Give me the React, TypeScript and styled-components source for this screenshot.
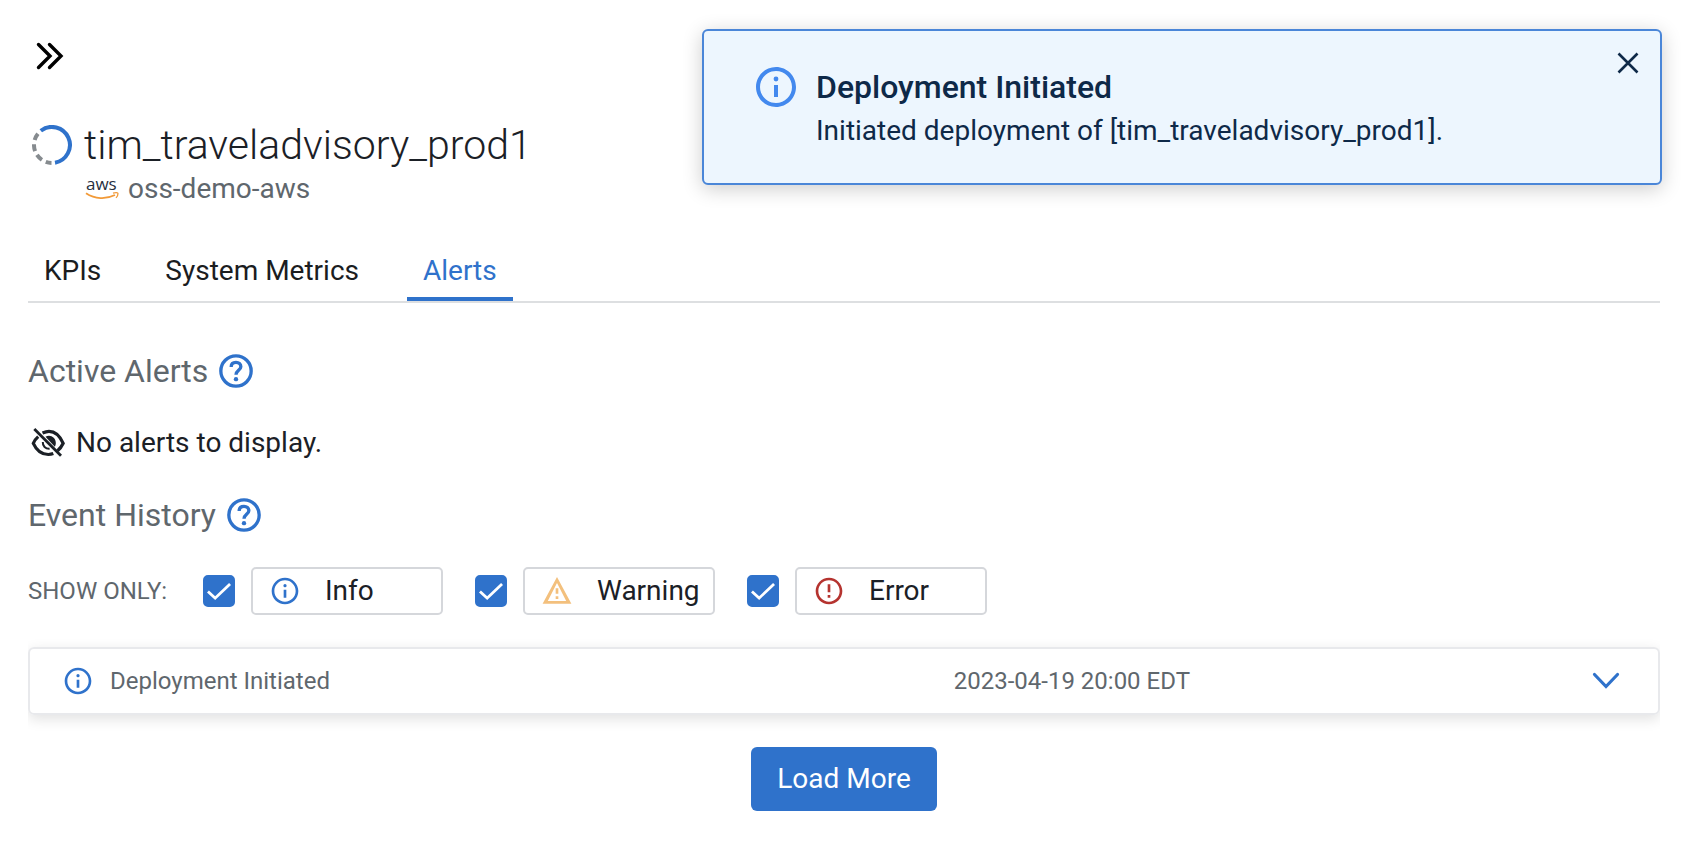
import React, { useState } from 'react';
import styled, { createGlobalStyle } from 'styled-components';

const GlobalStyle = createGlobalStyle`
  *, *::before, *::after { box-sizing: border-box; }
  body {
    margin: 0;
    background: #ffffff;
    color: #1b2026;
    font-family: Roboto, "Liberation Sans", sans-serif;
    font-size: 28px;
    line-height: 32px;
  }
  h1, h2, p { margin: 0; }
  button { font: inherit; color: inherit; cursor: pointer; }
  svg { display: block; flex: none; }
`;

const blue = '#2f72cb';
const grey = '#5f676d';

const Page = styled.main`
  display: flex;
  flex-direction: column;
  padding: 36px 34px 32px 28px;
`;

const IconButton = styled.button`
  display: flex;
  padding: 0;
  border: 0;
  background: none;
`;

const TopBar = styled.div`
  display: flex;
  padding-left: 2px;
`;

const Header = styled.header`
  display: grid;
  grid-template-columns: 44px 1fr;
  gap: 4px 12px;
  margin-top: 45px;
`;

const SpinnerCell = styled.div`
  display: flex;
  align-items: center;
  justify-content: flex-end;
`;

const Title = styled.h1`
  font-size: 41px;
  font-weight: 300;
  line-height: 48px;
`;

const Provider = styled.div`
  grid-column: 2;
  display: flex;
  align-items: center;
  gap: 8px;
  color: ${grey};
`;

const Tabs = styled.nav`
  display: flex;
  gap: 32px;
  margin-top: 40px;
  border-bottom: 2px solid #dddfe1;
`;

const Tab = styled.button<{ $active: boolean }>`
  height: 56px;
  padding: 0 16px;
  border: 0;
  border-bottom: 4px solid ${(p) => (p.$active ? blue : 'transparent')};
  background: none;
  color: ${(p) => (p.$active ? blue : '#1b1d1f')};
`;

const SectionHeading = styled.h2`
  display: flex;
  align-items: center;
  gap: 8px;
  height: 40px;
  color: ${grey};
  font-size: 32px;
  font-weight: 400;
`;

const ActiveSection = styled.section`
  display: flex;
  flex-direction: column;
  gap: 32px;
  margin-top: 48px;
`;

const EmptyState = styled.p`
  display: flex;
  align-items: center;
  gap: 8px;
`;

const HistorySection = styled.section`
  display: flex;
  flex-direction: column;
  margin-top: 32px;
`;

const Filters = styled.div`
  display: flex;
  align-items: center;
  gap: 32px;
  margin-top: 32px;
`;

const FilterCaption = styled.span`
  min-width: 143px;
  color: ${grey};
  font-size: 24px;
`;

const Filter = styled.label`
  display: flex;
  align-items: center;
  gap: 16px;
  cursor: pointer;
`;

const Checkbox = styled.input`
  appearance: none;
  display: grid;
  place-items: center;
  width: 32px;
  height: 32px;
  margin: 0;
  border: 2px solid ${blue};
  border-radius: 5px;
  &:checked { background: ${blue}; }
  &:checked::before {
    content: '';
    width: 24px;
    height: 24px;
    background: #ffffff;
    clip-path: polygon(0 56%, 8% 48%, 34% 72%, 92% 17%, 100% 25%, 34% 87%);
  }
`;

const FilterBox = styled.span`
  display: flex;
  align-items: center;
  gap: 24px;
  width: 192px;
  height: 48px;
  padding-left: 16px;
  border: 2px solid #d5d7db;
  border-radius: 5px;
`;

const EventList = styled.div`
  margin-top: 20px;
  padding: 12px 0 20px;
  overflow: hidden;
`;

const EventRow = styled.article`
  display: grid;
  grid-template-columns: 926fr 706fr;
  align-items: center;
  height: 68px;
  border: 2px solid #e8e9ec;
  border-radius: 6px;
  box-shadow: 0 4px 14px rgba(0, 0, 0, 0.12);
  color: ${grey};
  font-size: 24px;
`;

const EventName = styled.div`
  display: flex;
  align-items: center;
  gap: 16px;
  padding-left: 32px;
`;

const EventMeta = styled.div`
  display: flex;
  align-items: center;
  justify-content: space-between;
  padding-right: 38px;
`;

const LoadMore = styled.button`
  align-self: center;
  height: 64px;
  margin-top: 12px;
  padding: 0 26px;
  border: 0;
  border-radius: 6px;
  background: ${blue};
  color: #ffffff;
`;

const Toast = styled.aside`
  position: absolute;
  top: 29px;
  right: 32px;
  display: flex;
  gap: 16px;
  width: 960px;
  max-width: calc(100% - 64px);
  height: 156px;
  padding: 32px 18px 0 48px;
  border: 2px solid #4a86d8;
  border-radius: 6px;
  background: #edf6fe;
  box-shadow: 0 4px 20px rgba(0, 0, 0, 0.2);
  color: #0e2948;
`;

const ToastText = styled.div`
  flex: 1;
  display: flex;
  flex-direction: column;
  gap: 8px;
  padding-top: 4px;
`;

const ToastTitle = styled.h2`
  font-size: 32px;
  font-weight: 500;
  line-height: 40px;
`;

const ToastClose = styled(IconButton)`
  align-self: flex-start;
  margin-top: -14px;
`;

type IconProps = { size: number; color: string };

const CircleInfo = ({ size, color }: IconProps) => (
  <svg width={size} height={size} viewBox="0 0 24 24" fill={color} aria-hidden="true">
    <path d="M11 17h2v-6h-2v6zm1-15C6.480 2 2 6.480 2 12s4.480 10 10 10 10-4.480 10-10S17.520 2 12 2zm0 18c-4.410 0-8-3.590-8-8s3.590-8 8-8 8 3.590 8 8-3.590 8-8 8z" />
    <circle cx="12" cy="8" r="1.2" />
  </svg>
);

const Help = () => (
  <svg width="40" height="40" viewBox="0 0 24 24" fill="none" stroke={blue} strokeWidth="2" aria-hidden="true">
    <circle cx="12" cy="12" r="9.100" />
    <path d="M9.100 9.600C9.100 7.800 10.300 6.800 12 6.800s2.900 1.100 2.900 2.600c0 2.100-2.900 2.300-2.900 4.800" />
    <circle cx="12" cy="16.900" r="1.300" fill={blue} stroke="none" />
  </svg>
);

const ErrorIcon = () => (
  <svg width="32" height="32" viewBox="0 0 24 24" fill="#b5332f" aria-hidden="true">
    <path d="M11 7h2v6h-2zM11 15h2v2h-2zM12 2C6.480 2 2 6.480 2 12s4.480 10 10 10 10-4.480 10-10S17.520 2 12 2zm0 18c-4.420 0-8-3.580-8-8s3.580-8 8-8 8 3.580 8 8-3.580 8-8 8z" />
  </svg>
);

const WarningIcon = () => (
  <svg width="32" height="32" viewBox="0 0 24 24" fill="#f3c07d" aria-hidden="true">
    <path d="M12 6 18.900 19.500H5.100L12 6M12 1.500 1.200 21.500h21.600L12 1.500zm1 14.500h-2v2h2v-2zm0-6h-2v4h2v-4z" />
  </svg>
);

const EyeOff = () => (
  <svg width="40" height="40" viewBox="0 0 40 40" fill="none" stroke="#1b2026" strokeWidth="3.200" aria-hidden="true">
    <path d="M14.500 10C17 8.900 18.800 8.300 21 8.300c5.800 0 10.800 4.300 14.200 12-1.500 3.200-3.300 5.600-5.700 7.500" />
    <path d="M10.200 13.600C8 15.500 6.500 17.600 5.300 20.300c3.200 7 8.700 11.200 15 11.200 1.800 0 3.500-.3 5-.9" />
    <path d="M6.300 6 33 32.700" strokeWidth="2.800" />
    <path d="M17.500 13.800c4.200-3 10.300.3 10.300 6.200 0 1.600-.4 2.700-1 3.700z" fill="#1b2026" stroke="none" />
    <path d="M14.800 19c-.3 4 2.700 7 6.800 6.800" strokeWidth="2" />
  </svg>
);

const DoubleChevron = () => (
  <svg width="40" height="40" viewBox="0 0 40 40" fill="none" stroke="#000" strokeWidth="3.400" strokeLinecap="round" aria-hidden="true">
    <path d="M8.500 8.500 20 20 8.500 31.500M19.500 8.500 31 20 19.500 31.500" />
  </svg>
);

const Spinner = () => (
  <svg width="40" height="40" viewBox="0 0 40 40" fill="none" strokeWidth="4" aria-hidden="true">
    <path d="M8.800 5.800A18 18 0 1 1 23 37.700" stroke={blue} />
    <path d="M5.900 8.800A18 18 0 0 0 19.500 38" stroke="#868b8f" strokeDasharray="7 4.300" />
  </svg>
);

const AwsLogo = () => (
  <svg width="36" height="32" viewBox="0 0 36 32" overflow="visible" aria-hidden="true">
    <text x="2" y="17" fontFamily="Open Sans, sans-serif" fontSize="17" fontWeight="500" fill="#252f3e">aws</text>
    <path d="M2 20.200c9 6 20 6.300 29 1.800" fill="none" stroke="#f29a38" strokeWidth="1.800" />
    <path d="M29 20.200c2.500-.8 5-.6 5 .2 0 1.300-.8 3.200-2 4.500" fill="none" stroke="#f29a38" strokeWidth="1.300" />
  </svg>
);

const Chevron = () => (
  <svg width="28" height="28" viewBox="0 0 28 28" fill="none" stroke={blue} strokeWidth="3.200" strokeLinecap="round" aria-hidden="true">
    <path d="M2.500 7.500 14 19.500 25.500 7.500" />
  </svg>
);

const Close = () => (
  <svg width="28" height="28" viewBox="0 0 28 28" fill="none" stroke="#0e2948" strokeWidth="2.600" aria-hidden="true">
    <path d="M4.500 4.500 23.500 23.500M23.500 4.500 4.500 23.500" />
  </svg>
);

const tabs = ['KPIs', 'System Metrics', 'Alerts'];

const filters = [
  { label: 'Info', icon: <CircleInfo size={32} color={blue} /> },
  { label: 'Warning', icon: <WarningIcon /> },
  { label: 'Error', icon: <ErrorIcon /> },
];

export default function App() {
  const [active, setActive] = useState('Alerts');
  const [toastOpen, setToastOpen] = useState(true);

  return (
    <>
      <GlobalStyle />
      <Page>
        <TopBar>
          <IconButton aria-label="Collapse panel"><DoubleChevron /></IconButton>
        </TopBar>
        <Header>
          <SpinnerCell><Spinner /></SpinnerCell>
          <Title>tim_traveladvisory_prod1</Title>
          <Provider><AwsLogo />oss-demo-aws</Provider>
        </Header>
        <Tabs>
          {tabs.map((t) => (
            <Tab key={t} $active={t === active} onClick={() => setActive(t)}>{t}</Tab>
          ))}
        </Tabs>
        <ActiveSection>
          <SectionHeading>
            Active Alerts
            <IconButton aria-label="About active alerts"><Help /></IconButton>
          </SectionHeading>
          <EmptyState><EyeOff />No alerts to display.</EmptyState>
        </ActiveSection>
        <HistorySection>
          <SectionHeading>
            Event History
            <IconButton aria-label="About event history"><Help /></IconButton>
          </SectionHeading>
          <Filters>
            <FilterCaption>SHOW ONLY:</FilterCaption>
            {filters.map((f) => (
              <Filter key={f.label}>
                <Checkbox type="checkbox" defaultChecked />
                <FilterBox>{f.icon}{f.label}</FilterBox>
              </Filter>
            ))}
          </Filters>
          <EventList>
            <EventRow>
              <EventName><CircleInfo size={32} color={blue} />Deployment Initiated</EventName>
              <EventMeta>
                <time dateTime="2023-04-19T20:00-04:00">2023-04-19 20:00 EDT</time>
                <IconButton aria-label="Show details"><Chevron /></IconButton>
              </EventMeta>
            </EventRow>
          </EventList>
          <LoadMore>Load More</LoadMore>
        </HistorySection>
      </Page>
      {toastOpen && (
        <Toast role="status">
          <CircleInfo size={48} color="#4389ee" />
          <ToastText>
            <ToastTitle>Deployment Initiated</ToastTitle>
            <p>Initiated deployment of [tim_traveladvisory_prod1].</p>
          </ToastText>
          <ToastClose aria-label="Dismiss" onClick={() => setToastOpen(false)}><Close /></ToastClose>
        </Toast>
      )}
    </>
  );
}
